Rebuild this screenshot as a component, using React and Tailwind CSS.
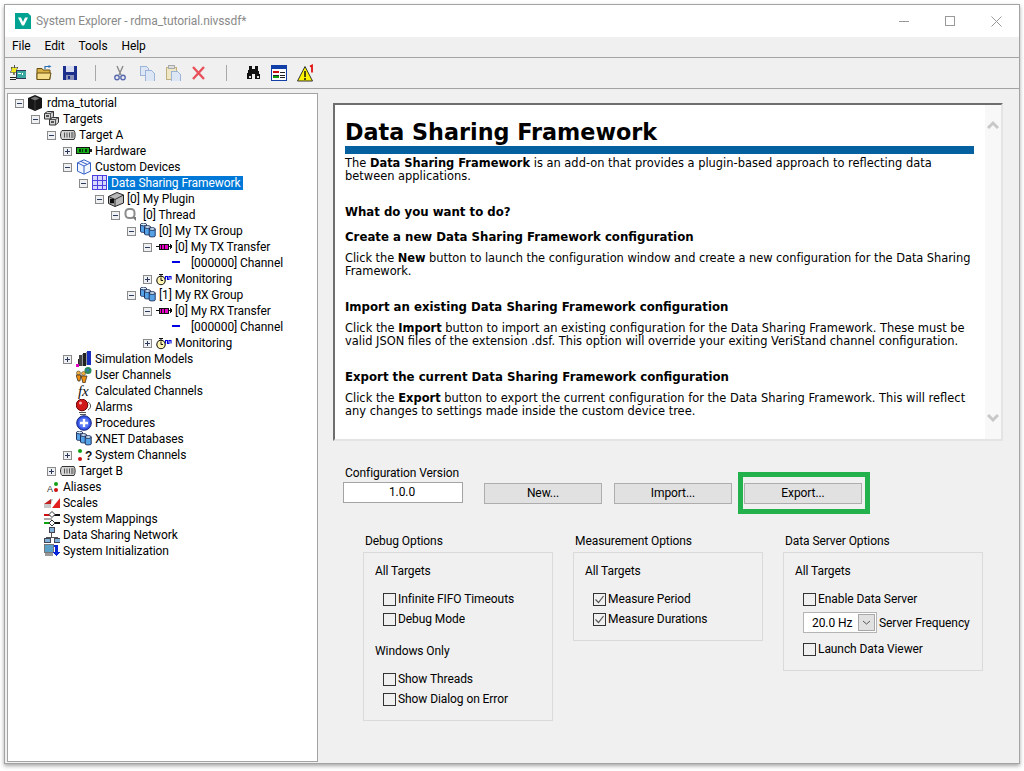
import React from 'react';

const S = ({ children, w = 16, h = 16, className = '' }) => (
  <svg width={w} height={h} viewBox={`0 0 ${w} ${h}`} className={`block shrink-0 ${className}`} shapeRendering="crispEdges">{children}</svg>
);
const V = ({ children }) => <svg width="16" height="16" viewBox="0 0 16 16" className="block shrink-0">{children}</svg>;
const Cyl = ({ x, y }) => (<g><path d={`M${x} ${y + 1.5}v7c0 1.2 6 1.2 6 0v-7z`} fill="#55a3e6" stroke="#16244f" strokeWidth=".9" /><ellipse cx={x + 3} cy={y + 1.5} rx="3" ry="1.4" fill="#d6ecfc" stroke="#16244f" strokeWidth=".9" /></g>);
const Chassis = ({ x, y }) => (<g><path d={`M${x + .5} ${y + 2.5}l3-2h6v5l-3 2.5h-6z`} fill="#d4d4d4" stroke="#333" /><path d={`M${x + .5} ${y + 2.5}h6l3-2M${x + 6.5} ${y + 2.5}v5.5`} fill="none" stroke="#333" strokeWidth=".8" /><rect x={x + 2} y={y + 4} width="3" height="2" fill="#555" /></g>);
const Group = () => <V><Cyl x={.5} y={0} /><Cyl x={4.5} y={2.5} /><Cyl x={9.2} y={4.5} /></V>;

const icons = {
  root: <V><path d="M7 0l7 3v10l-7 3-7-3V3z" fill="#161616" /><path d="M7 1.5l4.5 2L7 5.5l-4.5-2z" fill="#7a7a7a" /><path d="M7 6v10" stroke="#3a3a3a" /></V>,
  targets: <V><Chassis x={0} y={0} /><Chassis x={5} y={6} /></V>,
  target: <V><path d="M2 3.500h12c1.500 2 1.500 7 0 9H2c-2-2-2-7 0-9z" fill="#d4d4d4" stroke="#333" /><path d="M4.500 5.500v5M7 5.500v5M9.500 5.500v5" stroke="#555" /><rect x="11" y="5" width="2.600" height="6" fill="#8a8a8a" /></V>,
  hw: <S><rect x="0.5" y="4.5" width="13" height="6" fill="#16b016" stroke="#111" /><path d="M3 6h2v3H3zM6 6h1v3H6zM9 6h2v3H9z" fill="#06300b" /><rect x="14" y="6" width="2" height="3" fill="#222" /></S>,
  cd: <V><path d="M8 .8l6.5 3v8.4L8 15.2l-6.5-3V3.800z" fill="#f2f6ff" stroke="#3560c8" /><path d="M1.500 3.800L8 7l6.500-3.200M8 7v8M4.500 2.300l6.500 3" fill="none" stroke="#3560c8" /></V>,
  dsf: <S><rect x="0.5" y="0.5" width="14" height="14" fill="#d8d8ff" stroke="#4a3fe0" /><path d="M5.500 1v13M10.500 1v13M1 5.500h13M1 10.500h13" stroke="#4a3fe0" /></S>,
  plugin: <V><path d="M.5 5.500L9 1.500l6.500 2.500v8L7 15.500.5 12.500z" fill="#b8b8b8" stroke="#222" /><path d="M.5 5.500L7 8.500l8.500-4.500M7 8.500v7" fill="none" stroke="#333" /><rect x="2" y="7.800" width="4" height="4.500" fill="#0c0c0c" /></V>,
  thread: <V><rect x="1.500" y="2" width="9" height="9" rx="3.500" fill="none" stroke="#8c8c8c" strokeWidth="2" /><path d="M8 10h4v4z" fill="#777" /></V>,
  group: <Group />,
  transfer: <S><rect x="0" y="7" width="3" height="1" fill="#111" /><rect x="3" y="5" width="9" height="5" fill="#e800c8" stroke="#111" /><path d="M5.500 5v5M8.500 5v5" stroke="#111" /><path d="M12 7.500h3" stroke="#111" /><path d="M14 5.500l2 2-2 2" stroke="#111" fill="none" /></S>,
  channel: <S><rect x="0" y="6" width="8" height="2" fill="#0000e0" /></S>,
  monitor: <V><circle cx="5" cy="9.500" r="4.200" fill="#fff4b0" stroke="#111" strokeWidth="1.100" /><path d="M3 3.500h4M5 4v2M5 6.500v3h2" stroke="#111" fill="none" /><path d="M9.500 8.500V5.500h2V8.500h1.500V5.500H15V8.500" stroke="#0000e0" fill="none" strokeWidth="1.100" /></V>,
  sim: <S><path d="M1 15l2-9h3v9z" fill="#2a2a2a" /><rect x="3" y="4" width="3" height="11" fill="#444" /><rect x="6" y="3" width="1" height="12" fill="#999" /><rect x="7" y="2" width="3" height="13" fill="#222" /><rect x="10" y="1" width="1" height="13" fill="#999" /><rect x="11" y="0" width="4" height="14" fill="#1a2fc0" /><rect x="0" y="13" width="3" height="3" fill="#e000c0" /></S>,
  user: <V><circle cx="12" cy="3.500" r="3.500" fill="#2a8a5a" /><path d="M10 2h3l-1 3z" fill="#3a70d0" /><circle cx="2.500" cy="6" r="2" fill="#f0b040" stroke="#333" strokeWidth=".5" /><circle cx="7.500" cy="6.500" r="2" fill="#f0b040" stroke="#333" strokeWidth=".5" /><path d="M0 8h5l-1 6H2zM5 9h6l-2 7H7z" fill="#f09010" stroke="#222" strokeWidth=".7" /></V>,
  fx: <V><text x="2" y="13" fontFamily="'Liberation Serif', serif" fontStyle="italic" fontSize="15" fill="#111">fx</text></V>,
  alarm: <V><circle cx="6" cy="6" r="5.800" fill="#d01818" stroke="#6a0000" /><circle cx="4.500" cy="4" r="1.500" fill="#f8b0b0" /><path d="M12 3c3.500 2 3.500 6 0 8M3 13.500h7M4 15.500h6" stroke="#555" fill="none" /></V>,
  proc: <V><circle cx="8" cy="8" r="7.300" fill="#2f4fe8" stroke="#182878" /><circle cx="8" cy="8" r="5.400" fill="#5a78f0" /><path d="M8 4v8M4 8h8" stroke="#fff" strokeWidth="2.400" /></V>,
  sys: <V><circle cx="4" cy="4" r="2" fill="#10a010" /><circle cx="4" cy="12" r="2" fill="#d01010" /><text x="9" y="13" fontFamily="'Liberation Sans', sans-serif" fontWeight="700" fontSize="12" fill="#111">?</text></V>,
  alias: <V><text x="3" y="13" fontFamily="'Liberation Sans', sans-serif" fontSize="9" fill="#333">A</text><circle cx="12" cy="5" r="2" fill="#10a010" /><circle cx="12" cy="11" r="2" fill="#d01010" /></V>,
  scales: <V><path d="M0 9l7-5v5z" fill="#c02020" /><path d="M8 13L16 3v10z" fill="#e02020" /><path d="M7 4h2L7 9z" fill="#bbb" /><path d="M0 9h7v4H0z" fill="#c8c8c8" /></V>,
  map: <V><rect x="0" y="3" width="7" height="2" fill="#d01010" /><rect x="9" y="3" width="7" height="2" fill="#111" /><rect x="0" y="11" width="7" height="2" fill="#10a010" /><rect x="9" y="11" width="7" height="2" fill="#111" /><path d="M8 .5l3 3-3 3-3-3zM8 9l3 3-3 3-3-3z" fill="#fff" stroke="#333" /><rect x="0" y="7.500" width="8" height="1" fill="#555" /></V>,
  net: <S><rect x="5" y="0" width="5" height="5" fill="#7fb0d8" stroke="#445" /><rect x="7" y="5" width="1" height="5" fill="#555" /><rect x="2" y="10" width="12" height="1" fill="#555" /><rect x="0" y="11" width="6" height="4" fill="#7fb0d8" stroke="#445" /><rect x="10" y="11" width="6" height="4" fill="#7fb0d8" stroke="#445" /></S>,
  init: <S><rect x="0.500" y="1.500" width="9" height="8" fill="#5aa0c8" stroke="#777" /><rect x="1" y="10" width="8" height="3" fill="#999" /><path d="M10 2h4v7h2l-3.500 4L9 9h2V4h-1z" fill="#0828d8" /></S>,
};

const tree = [
  [0, '-', 'root', 'rdma_tutorial'],
  [1, '-', 'targets', 'Targets'],
  [2, '-', 'target', 'Target A'],
  [3, '+', 'hw', 'Hardware'],
  [3, '-', 'cd', 'Custom Devices'],
  [4, '-', 'dsf', 'Data Sharing Framework', true],
  [5, '-', 'plugin', '[0] My Plugin'],
  [6, '-', 'thread', '[0] Thread'],
  [7, '-', 'group', '[0] My TX Group'],
  [8, '-', 'transfer', '[0] My TX Transfer'],
  [9, '', 'channel', '[000000] Channel'],
  [8, '+', 'monitor', 'Monitoring'],
  [7, '-', 'group', '[1] My RX Group'],
  [8, '-', 'transfer', '[0] My RX Transfer'],
  [9, '', 'channel', '[000000] Channel'],
  [8, '+', 'monitor', 'Monitoring'],
  [3, '+', 'sim', 'Simulation Models'],
  [3, '', 'user', 'User Channels'],
  [3, '', 'fx', 'Calculated Channels'],
  [3, '', 'alarm', 'Alarms'],
  [3, '', 'proc', 'Procedures'],
  [3, '', 'group', 'XNET Databases'],
  [3, '+', 'sys', 'System Channels'],
  [2, '+', 'target', 'Target B'],
  [1, '', 'alias', 'Aliases'],
  [1, '', 'scales', 'Scales'],
  [1, '', 'map', 'System Mappings'],
  [1, '', 'net', 'Data Sharing Network'],
  [1, '', 'init', 'System Initialization'],
];

const Expander = ({ kind }) => {
  if (!kind) return <span className="w-[9px] h-[9px] shrink-0" />;
  return (
    <svg width="9" height="9" viewBox="0 0 9 9" className="block shrink-0" shapeRendering="crispEdges">
      <rect x=".5" y=".5" width="8" height="8" fill="#eef0f4" stroke="#8a8a8a" />
      <path d="M2 4.500h5" stroke="#2c3a5c" />
      {kind === '+' && <path d="M4.500 2v5" stroke="#2c3a5c" />}
    </svg>
  );
};

const Row = ({ item }) => {
  const [level, exp, icon, text, sel] = item;
  return (
    <div className="flex items-center h-4" style={{ paddingLeft: 7 + level * 16 }}>
      <Expander kind={exp} />
      <span className="ml-1 w-4">{icons[icon]}</span>
      {sel
        ? <span className="px-[3px] h-[14px] leading-[15px] bg-[#0078d7] text-white whitespace-nowrap">{text}</span>
        : <span className="ml-[3px] whitespace-nowrap">{text}</span>}
    </div>
  );
};

const Check = ({ label, checked }) => (
  <div className="flex items-center h-5 ml-2">
    <span className="w-[13px] h-[13px] border border-[#333] flex items-center justify-center shrink-0">
      {checked && <svg width="11" height="11" viewBox="0 0 11 11" className="block"><path d="M1.500 5.500l3 3 5-6.500" fill="none" stroke="#555" strokeWidth="1.200" /></svg>}
    </span>
    <span className="ml-[2px] whitespace-nowrap">{label}</span>
  </div>
);

const Btn = ({ children }) => (
  <div className="w-[118px] h-[21px] border border-[#adadad] bg-[#e1e1e1] flex items-center justify-center leading-none pb-[2px]">{children}</div>
);

const H = ({ children }) => <div className="font-bold text-[11.75px] leading-[15px] whitespace-nowrap">{children}</div>;
const P = ({ children, className = '' }) => <p className={`text-[11.45px] leading-[13px] whitespace-nowrap ${className}`}>{children}</p>;

const Tool = ({ children, className = '' }) => <span className={`w-4 h-4 shrink-0 ${className}`}>{children}</span>;
const Sep = ({ className = '' }) => <span className={`w-px h-4 bg-[#a8a8a8] shrink-0 ${className}`} />;

export default function App() {
  return (
    <div className="h-[771px] w-[1024px] bg-white pt-1 pl-1 overflow-hidden font-['Roboto',sans-serif] text-[12px] tracking-[-0.08px] text-black">
      <div className="w-[1016px] h-[760px] border border-[#a3a3a3] flex flex-col bg-[#f0f0f0] shadow-[0_2px_4px_rgba(0,0,0,0.35)]">
        {/* title */}
        <div className="h-[32px] bg-white flex items-center shrink-0">
          <svg width="16" height="16" viewBox="0 0 16 16" className="block ml-[10px] shrink-0">
            <path d="M0 0h13l3 3v13H0z" fill="#00a391" />
            <path d="M3 4.500h3l2 4.500 2-4.500h3l-4 8H7z" fill="#fff" />
          </svg>
          <span className="ml-[5px] text-[#8a8a8a] whitespace-nowrap">System Explorer - rdma_tutorial.nivssdf*</span>
          <div className="ml-auto flex h-full">
            <span className="w-[46px] flex items-center justify-center"><svg width="10" height="10" viewBox="0 0 10 10" className="block" shapeRendering="crispEdges"><path d="M0 5.500h10" stroke="#999" /></svg></span>
            <span className="w-[46px] flex items-center justify-center"><svg width="10" height="10" viewBox="0 0 10 10" className="block" shapeRendering="crispEdges"><rect x=".5" y=".5" width="9" height="9" fill="none" stroke="#999" /></svg></span>
            <span className="w-[46px] flex items-center justify-center"><svg width="11" height="11" viewBox="0 0 11 11" className="block"><path d="M.5.500l10 10M10.500.500l-10 10" stroke="#999" /></svg></span>
          </div>
        </div>
        {/* menu */}
        <div className="h-[21px] shrink-0 flex items-center pl-[7px] gap-[14px] border-b border-[#a3a3a3] pb-[3px]">
          <span>File</span><span>Edit</span><span>Tools</span><span>Help</span>
        </div>
        {/* toolbar */}
        <div className="h-[31px] shrink-0 flex items-center pl-[5px] border-b border-[#a3a3a3]">
          <Tool>
            <S><path d="M4 0l1 3 3-1-2 3 2 2-3 0-1 3-1-3H0l2-2-1-3 3 1z" fill="#f0e820" stroke="#222" strokeWidth=".5" /><rect x="6" y="5" width="10" height="8" fill="#3aa8a0" stroke="#335" /><path d="M8 8h3M12 8l1 2" stroke="#fff" /><path d="M0 12h6M0 14h6" stroke="#222" /></S>
          </Tool>
          <Tool className="ml-[10px]">
            <V><path d="M1 3.500h5l1 1.500h7v9.500H1z" fill="#d8b048" stroke="#6a5010" /><path d="M1 8h14l-1.500 6.500H1z" fill="#f4dc88" stroke="#6a5010" /><path d="M9 4V1.500h4" stroke="#2a70b0" fill="none" strokeWidth="1.200" /><path d="M12.500 0l3 1.500-3 1.500z" fill="#2a70b0" /></V>
          </Tool>
          <Tool className="ml-[10px]">
            <S><path d="M1 1h14v14H1z" fill="#1c2f8c" /><rect x="4" y="1" width="8" height="6" fill="#d8dcf0" /><rect x="4" y="10" width="8" height="5" fill="#8a90b8" /><rect x="6" y="11" width="2" height="3" fill="#1c2f8c" /></S>
          </Tool>
          <Sep className="ml-[17px]" />
          <Tool className="ml-[16px]">
            <V><path d="M5 1l4 9M11 1L7 10" stroke="#8a8a8a" strokeWidth="1.400" /><circle cx="5" cy="12.500" r="2.200" fill="none" stroke="#5a6ab0" strokeWidth="1.400" /><circle cx="11" cy="12.500" r="2.200" fill="none" stroke="#5a6ab0" strokeWidth="1.400" /></V>
          </Tool>
          <Tool className="ml-[11px]">
            <S><path d="M1 1h6l2 2v7H1z" fill="#dce6f5" stroke="#9cb4d8" /><path d="M6 5h6l3 3v8H6z" fill="#dce6f5" stroke="#9cb4d8" /></S>
          </Tool>
          <Tool className="ml-[10px]">
            <S><rect x="1" y="2" width="10" height="12" fill="#efe6c4" stroke="#c0b080" /><rect x="3" y="0" width="6" height="3" fill="#ddd" stroke="#aaa" /><path d="M6 6h6l3 3v7H6z" fill="#dce6f5" stroke="#9cb4d8" /></S>
          </Tool>
          <Tool className="ml-[10px]">
            <V><path d="M2 2l11 12M13 2L2 14" stroke="#e8505a" strokeWidth="2.400" /></V>
          </Tool>
          <Sep className="ml-[19px]" />
          <Tool className="ml-[19px]">
            <S><path d="M3 1h3v3h3V1h3v3l2 6v4H9v-5H6v5H1v-4l2-6z" fill="#111" /><rect x="2.500" y="11" width="2" height="2" fill="#ddd" /><rect x="10.500" y="11" width="2" height="2" fill="#ddd" /></S>
          </Tool>
          <Tool className="ml-[9px]">
            <S><rect x="0.500" y="0.500" width="15" height="15" fill="#fff" stroke="#1040a8" /><rect x="1" y="1" width="14" height="3" fill="#1040a8" /><path d="M2 7h6" stroke="#d01010" strokeWidth="2" /><path d="M2 10h6" stroke="#222" strokeWidth="1" /><path d="M2 12h6" stroke="#10a010" strokeWidth="2" /><path d="M9 7h5M9 10h5M9 12h5" stroke="#222" /></S>
          </Tool>
          <Tool className="ml-[10px]">
            <svg width="18" height="17" viewBox="0 0 18 17" className="block overflow-visible"><path d="M8 1.500L15.500 16H.5z" fill="#fff200" stroke="#333" /><path d="M8 6v6M8 13v2" stroke="#111" strokeWidth="1.500" /><path d="M13 1.500l2-1v7" stroke="#e01010" strokeWidth="1.800" fill="none" /></svg>
          </Tool>
        </div>
        {/* body */}
        <div className="flex-1 min-h-0 flex pl-[2px] pt-[4px] pb-[1px]">
          <div className="w-[311px] shrink-0 bg-white border border-[#a3a3a3] pt-px">
            {tree.map((t, i) => <Row key={i} item={t} />)}
          </div>
          <div className="ml-[15px] pt-[10px] flex-1 min-w-0">
            {/* help */}
            <div className="w-[670px] h-[338px] bg-white border-t-2 border-l-2 border-t-[#6e6e6e] border-l-[#6e6e6e] border-r-2 border-r-[#e4e4e4] border-b-2 border-b-[#e4e4e4] flex">
              <div className="w-[650px] shrink-0 pl-[10px] pr-[10px] font-['DejaVu_Sans',sans-serif] tracking-normal text-black">
                <h1 className="font-bold text-[22.3px] leading-[28px] mt-[13px] whitespace-nowrap">Data Sharing Framework</h1>
                <div className="h-[8px] w-[629px] bg-[#0560a0]" />
                <div className="mt-[3px]"><P>The <b>Data Sharing Framework</b> is an add-on that provides a plugin-based approach to reflecting data<br />between applications.</P></div>
                <div className="mt-[22px]"><H>What do you want to do?</H></div>
                <div className="mt-[10px]"><H>Create a new Data Sharing Framework configuration</H></div>
                <div className="mt-[7px]"><P className="tracking-[-0.055px]">Click the <b>New</b> button to launch the configuration window and create a new configuration for the Data Sharing<br />Framework.</P></div>
                <div className="mt-[22px]"><H>Import an existing Data Sharing Framework configuration</H></div>
                <div className="mt-[7px]"><P>Click the <b>Import</b> button to import an existing configuration for the Data Sharing Framework. These must be<br />valid JSON files of the extension .dsf. This option will override your exiting VeriStand channel configuration.</P></div>
                <div className="mt-[22px]"><H>Export the current Data Sharing Framework configuration</H></div>
                <div className="mt-[7px]"><P>Click the <b>Export</b> button to export the current configuration for the Data Sharing Framework. This will reflect<br />any changes to settings made inside the custom device tree.</P></div>
              </div>
              <div className="w-[18px] bg-[#f8f8f8] flex flex-col items-center justify-between pt-[15px] pb-[16px]">
                <svg width="12" height="10" viewBox="0 0 12 10" className="block"><path d="M1 8l5-5 5 5" fill="none" stroke="#c8c8c8" strokeWidth="3" /></svg>
                <svg width="12" height="10" viewBox="0 0 12 10" className="block"><path d="M1 2l5 5 5-5" fill="none" stroke="#c8c8c8" strokeWidth="3" /></svg>
              </div>
            </div>
            {/* config */}
            <div className="mt-[24px] ml-[10px] flex items-start">
              <div className="w-[120px]">
                <div className="h-4 leading-4 pl-[2px] whitespace-nowrap">Configuration Version</div>
                <div className="mt-px h-[21px] border border-[#a3a3a3] bg-white flex items-center justify-center pb-[2px] pr-[2px]">1.0.0</div>
              </div>
              <div className="ml-[21px] mt-[18px] flex gap-3">
                <Btn>New...</Btn>
                <Btn>Import...</Btn>
                <div className="relative">
                  <Btn>Export...</Btn>
                  <div className="absolute -left-[6px] -top-[11px] w-[132px] h-[42px] border-[5px] border-[#22b14c]" />
                </div>
              </div>
            </div>
            {/* options */}
            <div className="mt-[29px] ml-[30px] flex items-start gap-5">
              <div className="w-[190px]">
                <div className="h-4 leading-4 pl-[2px]">Debug Options</div>
                <div className="mt-[3px] border border-[#dadada] pl-[11px] pt-[10px] pb-[11px]">
                  <div className="h-4 leading-4">All Targets</div>
                  <div className="mt-[10px]"><Check label="Infinite FIFO Timeouts" /><Check label="Debug Mode" /></div>
                  <div className="mt-[14px] h-4 leading-4">Windows Only</div>
                  <div className="mt-[10px]"><Check label="Show Threads" /><Check label="Show Dialog on Error" /></div>
                </div>
              </div>
              <div className="w-[190px]">
                <div className="h-4 leading-4 pl-[2px]">Measurement Options</div>
                <div className="mt-[3px] border border-[#dadada] pl-[11px] pt-[10px] pb-[11px]">
                  <div className="h-4 leading-4">All Targets</div>
                  <div className="mt-[10px]"><Check checked label="Measure Period" /><Check checked label="Measure Durations" /></div>
                </div>
              </div>
              <div className="w-[200px]">
                <div className="h-4 leading-4 pl-[2px]">Data Server Options</div>
                <div className="mt-[3px] border border-[#dadada] pl-[11px] pt-[10px] pb-[11px]">
                  <div className="h-4 leading-4">All Targets</div>
                  <div className="mt-[10px]"><Check label="Enable Data Server" /></div>
                  <div className="mt-[3px] ml-2 flex items-center h-[21px]">
                    <div className="w-[74px] h-[21px] border border-[#b4b4b4] bg-white flex items-center justify-between pl-2 pr-px">
                      <span>20.0 Hz</span>
                      <span className="w-[17px] h-[17px] border border-[#a8a8a8] bg-[#e1e1e1] flex items-center justify-center">
                        <svg width="9" height="5" viewBox="0 0 9 5" className="block"><path d="M1 1l3.500 3L8 1" fill="none" stroke="#555" /></svg>
                      </span>
                    </div>
                    <span className="ml-[2px] whitespace-nowrap">Server Frequency</span>
                  </div>
                  <div className="mt-[6px]"><Check label="Launch Data Viewer" /></div>
                </div>
              </div>
            </div>
          </div>
        </div>
      </div>
    </div>
  );
}
